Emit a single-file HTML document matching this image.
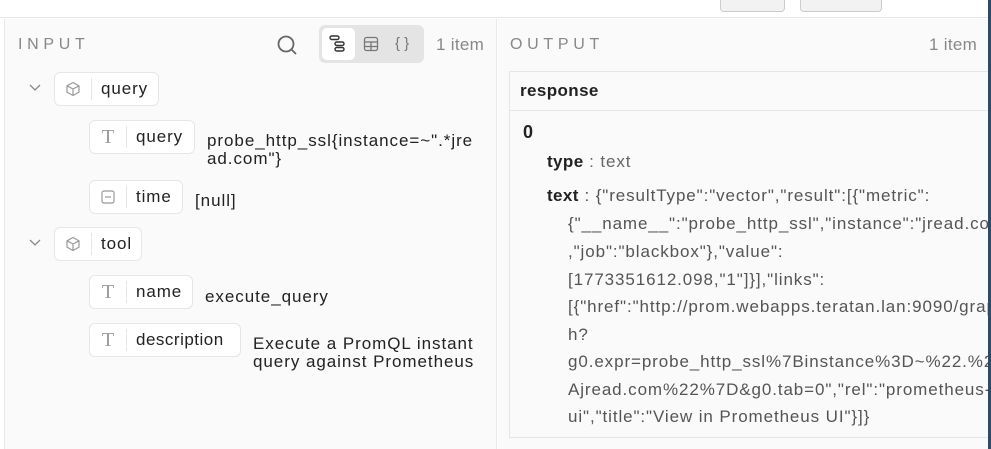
<!DOCTYPE html>
<html><head><meta charset="utf-8"><style>
*{margin:0;padding:0;box-sizing:border-box}
body{width:991px;height:449px;overflow:hidden;background:#fff;font-family:"Liberation Sans",sans-serif;color:#222;position:relative}
.a{position:absolute;white-space:nowrap}
.pill{position:absolute;height:34px;border:1px solid #e6e6e6;border-radius:6px;background:#fff;font-size:17px;letter-spacing:0.9px;line-height:32px}
.pill .ic{position:absolute;left:0;top:0;width:36px;height:32px;display:flex;align-items:center;justify-content:center;letter-spacing:0}
.pill .dv{position:absolute;left:36px;top:5px;width:1px;height:22px;background:#e6e6e6}
.pill .t{position:absolute;left:46px;top:0}
.v{position:absolute;font-size:17px;letter-spacing:0.95px;line-height:18px;color:#222;white-space:nowrap}
.o{position:absolute;font-size:17px;letter-spacing:0.9px;color:#555;white-space:nowrap;left:568px}
</style></head><body>
<div class="a" style="left:0;top:0;width:991px;height:18px;border-bottom:1px solid #e8e8e8;background:#fff"></div>
<div class="a" style="left:720px;top:-4px;width:65px;height:16px;border:1px solid #ccc;border-radius:4px;background:#f2f2f2"></div>
<div class="a" style="left:800px;top:-4px;width:82px;height:16px;border:1px solid #ccc;border-radius:4px;background:#f2f2f2"></div>
<div class="a" style="left:4px;top:19px;width:493px;height:430px;background:#fafafa;border-left:1px solid #e8e8e8;border-right:1px solid #e8e8e8"></div>
<div class="a" style="left:498px;top:19px;width:491px;height:430px;background:#fafafa"></div>

<div class="a" style="left:18px;top:36px;font-size:16px;letter-spacing:4.7px;color:#888">INPUT</div>
<svg class="a" style="left:276px;top:34px" width="22" height="22" viewBox="0 0 22 22"><circle cx="10" cy="10" r="7.5" fill="none" stroke="#666" stroke-width="1.8"/><line x1="15.5" y1="15.5" x2="20" y2="20" stroke="#666" stroke-width="1.8"/></svg>
<div class="a" style="left:319px;top:25px;width:105px;height:38px;background:#e4e4e4;border-radius:6px"></div>
<div class="a" style="left:322px;top:28px;width:33px;height:32px;background:#fff;border-radius:5px"></div>
<svg class="a" style="left:328px;top:35px" width="20" height="18" viewBox="0 0 20 18"><rect x="2" y="1" width="9" height="3.5" rx="1.7" fill="none" stroke="#333" stroke-width="1.4"/><rect x="7" y="7" width="9" height="3.5" rx="1.7" fill="none" stroke="#333" stroke-width="1.4"/><rect x="7" y="12.5" width="9" height="3.5" rx="1.7" fill="none" stroke="#333" stroke-width="1.4"/></svg>
<svg class="a" style="left:363px;top:36px" width="16" height="16" viewBox="0 0 16 16"><rect x="1.5" y="1.5" width="13" height="13" rx="2" fill="none" stroke="#777" stroke-width="1.3"/><line x1="1.5" y1="6" x2="14.5" y2="6" stroke="#777" stroke-width="1.3"/><line x1="1.5" y1="10.5" x2="14.5" y2="10.5" stroke="#777" stroke-width="1.3"/><line x1="8" y1="6" x2="8" y2="14.5" stroke="#777" stroke-width="1.3"/></svg>
<div class="a" style="left:395px;top:35px;font-size:15px;color:#777">{ }</div>
<div class="a" style="left:436px;top:35px;font-size:17px;letter-spacing:0.3px;color:#888">1 item</div>

<svg class="a" style="left:28px;top:83px" width="14" height="10" viewBox="0 0 14 10"><path d="M2 2l5 5 5-5" fill="none" stroke="#888" stroke-width="1.3"/></svg>
<div class="pill" style="left:54px;top:72px;width:105px"><div class="ic"><svg width="16" height="16" viewBox="0 0 16 16"><path d="M8 1.5l6 3.3v6.4L8 14.5 2 11.2V4.8z M2 4.8L8 8l6-3.2 M8 8v6.5" fill="none" stroke="#999" stroke-width="1.2"/></svg></div><div class="dv"></div><div class="t">query</div></div>
<div class="pill" style="left:89px;top:120px;width:106px"><div class="ic" style="font-family:'Liberation Serif',serif;color:#999;font-size:20px">T</div><div class="dv"></div><div class="t">query</div></div>
<div class="v" style="left:207px;top:132px">probe_http_ssl{instance=~".*jre<br>ad.com"}</div>
<div class="pill" style="left:89px;top:180px;width:94px"><div class="ic"><svg width="14" height="14" viewBox="0 0 14 14"><rect x="1" y="1" width="12" height="12" rx="2" fill="none" stroke="#999" stroke-width="1.2"/><line x1="4" y1="7" x2="10" y2="7" stroke="#999" stroke-width="1.2"/></svg></div><div class="dv"></div><div class="t">time</div></div>
<div class="v" style="left:195px;top:192px">[null]</div>

<svg class="a" style="left:28px;top:238px" width="14" height="10" viewBox="0 0 14 10"><path d="M2 2l5 5 5-5" fill="none" stroke="#888" stroke-width="1.3"/></svg>
<div class="pill" style="left:54px;top:227px;width:88px"><div class="ic"><svg width="16" height="16" viewBox="0 0 16 16"><path d="M8 1.5l6 3.3v6.4L8 14.5 2 11.2V4.8z M2 4.8L8 8l6-3.2 M8 8v6.5" fill="none" stroke="#999" stroke-width="1.2"/></svg></div><div class="dv"></div><div class="t">tool</div></div>
<div class="pill" style="left:89px;top:275px;width:104px"><div class="ic" style="font-family:'Liberation Serif',serif;color:#999;font-size:20px">T</div><div class="dv"></div><div class="t">name</div></div>
<div class="v" style="left:205px;top:288px">execute_query</div>
<div class="pill" style="left:89px;top:323px;width:152px"><div class="ic" style="font-family:'Liberation Serif',serif;color:#999;font-size:20px">T</div><div class="dv"></div><div class="t" style="letter-spacing:0.5px">description</div></div>
<div class="v" style="left:253px;top:335px">Execute a PromQL instant<br>query against Prometheus</div>

<div class="a" style="left:510px;top:36px;font-size:16px;letter-spacing:4.7px;color:#888">OUTPUT</div>
<div class="a" style="left:929px;top:35px;font-size:17px;letter-spacing:0.3px;color:#888">1 item</div>
<div class="a" style="left:509px;top:71px;width:490px;height:367px;border:1px solid #e6e6e6;background:#fafafa"></div>
<div class="a" style="left:510px;top:72px;width:480px;height:39px;border-bottom:1px solid #e6e6e6;background:#fafafa"></div>
<div class="a" style="left:520px;top:81px;font-size:17px;letter-spacing:0.4px;font-weight:bold;color:#222">response</div>
<div class="a" style="left:523px;top:122px;font-size:18px;font-weight:bold;color:#222">0</div>
<div class="a" style="left:547px;top:152px;font-size:17px;letter-spacing:0.9px;color:#666"><b style="color:#222;letter-spacing:0.4px">type</b> : text</div>
<div class="a" style="left:547px;top:186px;font-size:17px;letter-spacing:0.9px;color:#555"><b style="color:#222;letter-spacing:0.4px">text</b> : {"resultType":"vector","result":[{"metric":</div>
<div class="o" style="top:214px">{"__name__":"probe_http_ssl","instance":"jread.com"</div>
<div class="o" style="top:242px">,"job":"blackbox"},"value":</div>
<div class="o" style="top:270px">[1773351612.098,"1"]}],"links":</div>
<div class="o" style="top:297px">[{"href":"http://prom.webapps.teratan.lan:9090/grap</div>
<div class="o" style="top:325px">h?</div>
<div class="o" style="top:352px">g0.expr=probe_http_ssl%7Binstance%3D~%22.%2</div>
<div class="o" style="top:380px">Ajread.com%22%7D&amp;g0.tab=0","rel":"prometheus-</div>
<div class="o" style="top:407px">ui","title":"View in Prometheus UI"}]}</div>
<div class="a" style="left:988px;top:0;width:3px;height:449px;background:#2d4b68"></div>
</body></html>
